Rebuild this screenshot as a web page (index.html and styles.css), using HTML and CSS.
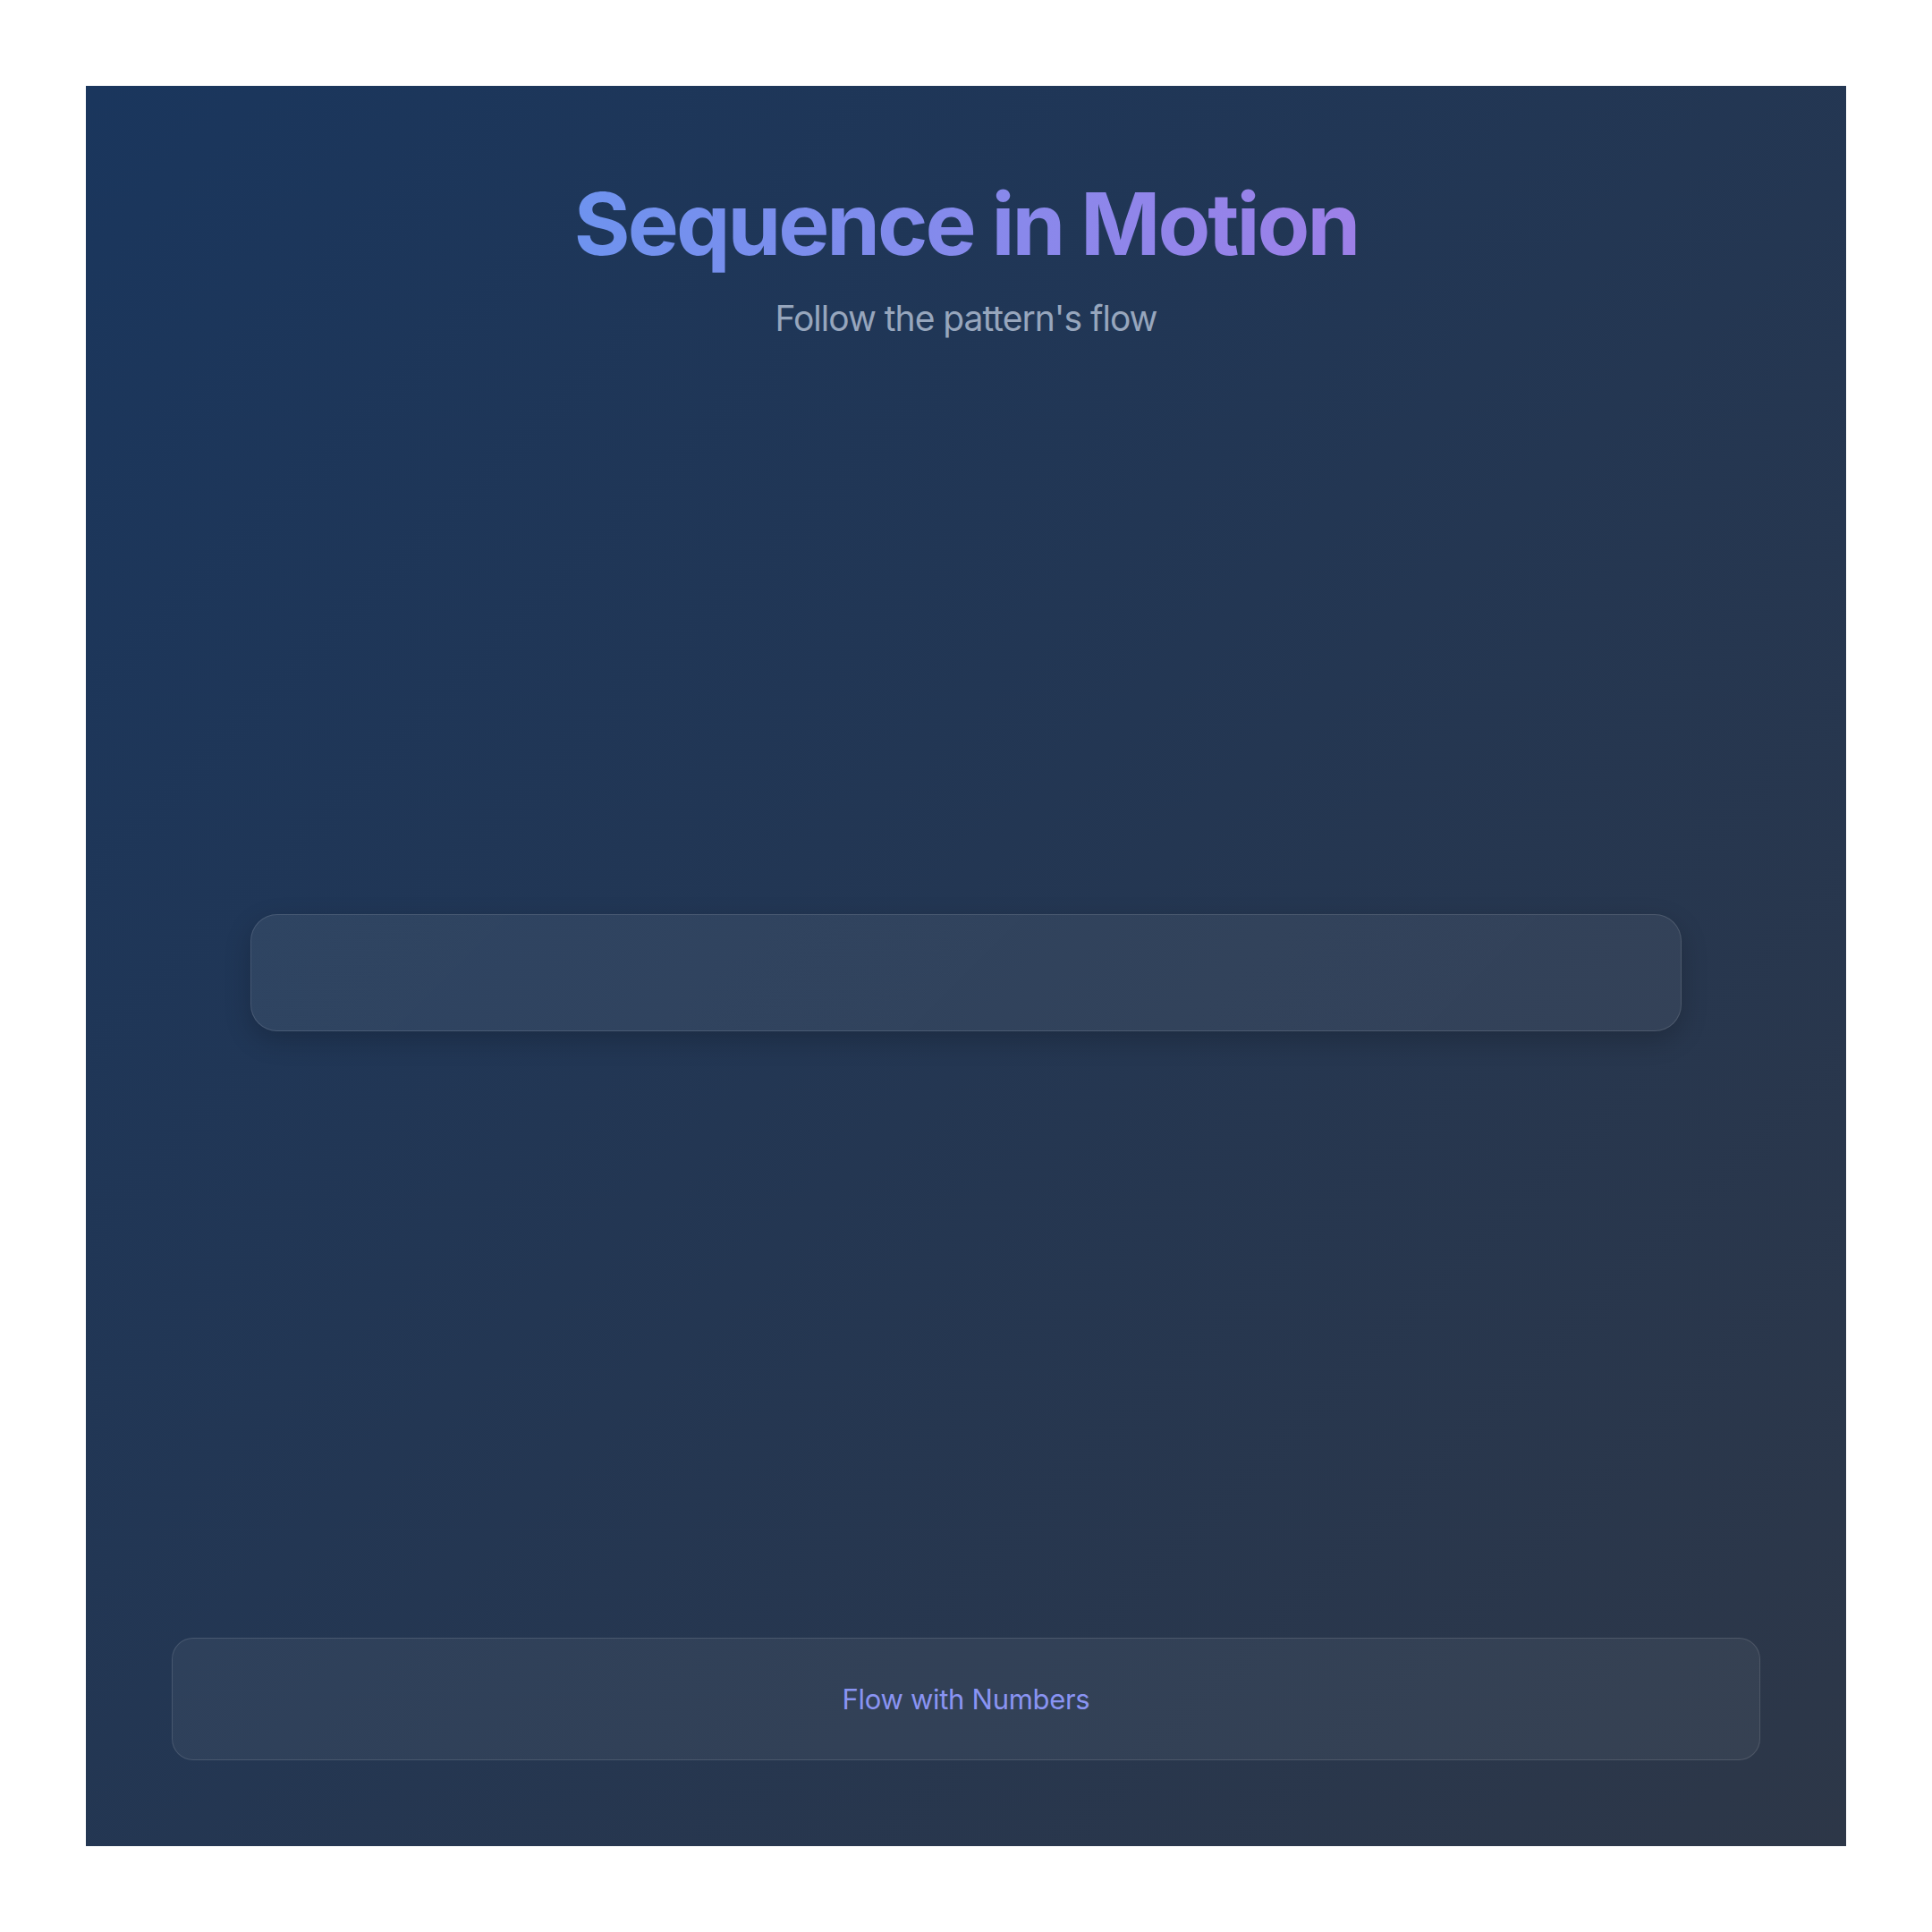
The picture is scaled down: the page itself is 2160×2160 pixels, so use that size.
FILE: index.html
```html
<!DOCTYPE html>
<html lang="en">
<head>
<meta charset="utf-8">
<title>Sequence in Motion</title>
<link rel="stylesheet" href="styles.css">
</head>
<body>
  <main class="panel">
    <header class="header">
      <h1 class="title">Sequence in Motion</h1>
      <p class="subtitle">Follow the pattern's flow</p>
    </header>
    <section class="stage">
      <div class="sequence"></div>
    </section>
    <footer class="controls">
      <span class="mode">Flow with Numbers</span>
    </footer>
  </main>
</body>
</html>
```

FILE: styles.css
```css
* { box-sizing: border-box; }

html, body {
  margin: 0;
  background: #ffffff;
}

body {
  padding: 96px;
  font-family: Inter, "Noto Sans", "Liberation Sans", sans-serif;
}

.panel {
  width: 1968px;
  height: 1968px;
  padding: 96px;
  display: flex;
  flex-direction: column;
  background: linear-gradient(135deg, #1a365d 0%, #2d3748 100%);
}

.header {
  text-align: center;
}

.title {
  margin: 0 0 24px;
  font-size: 96px;
  font-weight: 700;
  line-height: normal;
  letter-spacing: -3px;
  background: linear-gradient(90deg, #6e93ef 0%, #9d80e8 100%);
  -webkit-background-clip: text;
  background-clip: text;
  color: transparent;
  display: inline-block;
}

.subtitle {
  margin: 0;
  font-size: 39px;
  line-height: normal;
  letter-spacing: -1px;
  color: #97a6bd;
}

.stage {
  flex: 1;
  display: flex;
  align-items: center;
  justify-content: center;
}

.sequence {
  width: 1600px;
  height: 131px;
  border-radius: 30px;
  border: 1px solid rgba(255, 255, 255, 0.12);
  background: linear-gradient(135deg, rgba(255, 255, 255, 0.07) 0%, rgba(255, 255, 255, 0.06) 100%);
  box-shadow: 0 10px 30px rgba(0, 0, 0, 0.2);
}

.controls {
  margin-top: 35px;
  height: 137px;
  border-radius: 24px;
  border: 1px solid rgba(255, 255, 255, 0.12);
  background: rgba(255, 255, 255, 0.05);
  display: flex;
  align-items: center;
  justify-content: center;
}

.mode {
  font-size: 31px;
  letter-spacing: -0.3px;
  color: #8a94f3;
}
```
